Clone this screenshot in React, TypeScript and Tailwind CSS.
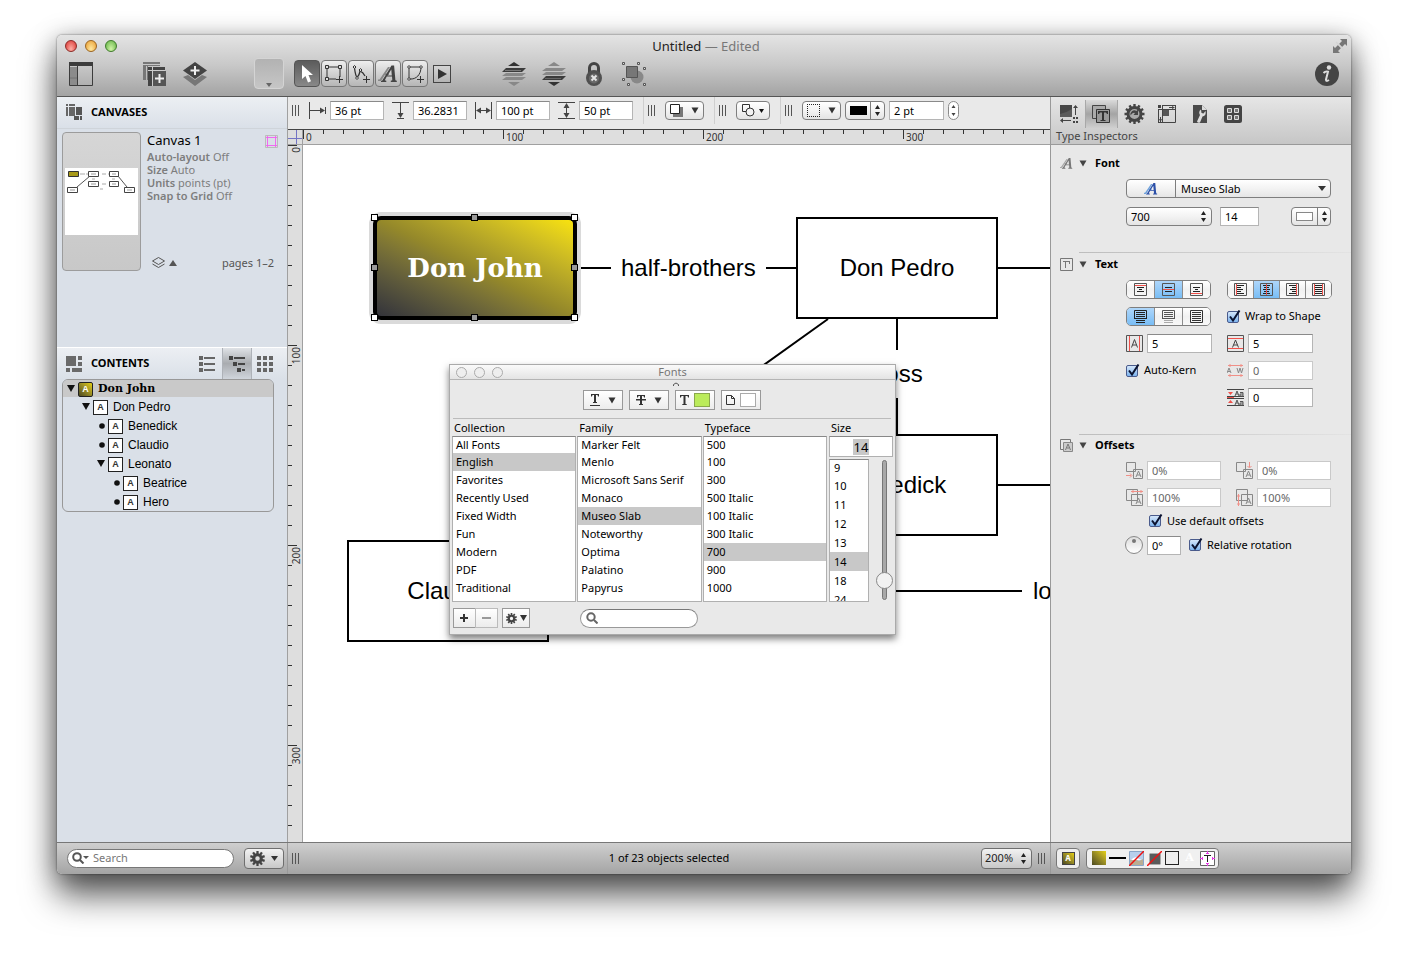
import type { ReactNode } from 'react';

type Kids = { children?: ReactNode };

function Svg({ w, h, children, className = '' }: Kids & { w: number; h: number; className?: string }) {
  return (
    <svg width={w} height={h} viewBox={`0 0 ${w} ${h}`} className={`shrink-0 ${className}`} fill="none" aria-hidden="true">
      {children}
    </svg>
  );
}

/* ---------- small shared drawings ---------- */

const Grip = () => (
  <Svg w={8} h={11}>
    <path d="M.5 0v11M3.500 0v11M6.500 0v11" stroke="#555" />
  </Svg>
);

const Down = ({ fill = '#333' }: { fill?: string }) => (
  <Svg w={8} h={7}>
    <path d="M.5.500h7L4 6.500z" fill={fill} />
  </Svg>
);

const UpDown = () => (
  <Svg w={5} h={11}>
    <path d="M2.500 0L5 4H0zM2.500 11L0 7h5z" fill="#222" />
  </Svg>
);

const Gear = ({ size = 14 }: { size?: number }) => (
  <svg width={size} height={size} viewBox="0 0 20 20" className="shrink-0" fill="none" aria-hidden="true">
    <circle cx="10" cy="10" r="5" stroke="#444" strokeWidth="4" />
    {[0, 36, 72, 108, 144].map((a) => (
      <path key={a} d="M8.500 0h3v4h-3zM8.500 16h3v4h-3z" fill="#444" transform={`rotate(${a} 10 10)`} />
    ))}
  </svg>
);

const ScriptA = ({ fill = '#444', back = '#888', size = 18 }: { fill?: string; back?: string; size?: number }) => (
  <svg width={size} height={size} viewBox="0 0 20 20" className="shrink-0" aria-hidden="true">
    <path d="M0 17h3L12 3h-2L1.500 15.500H0zM5 11h6v-1.500H6z" fill={back} />
    <path d="M3 18v-1l1.300-.4L13.500 1.500h2.600l1.300 14.700 1.400.6V18h-6v-1.200l1.500-.5-.3-3.700H8.800l-2 3.600 1.500.6V18zm6.500-6.600h4.300l-.5-6z" fill={fill} />
  </svg>
);

/* ---------- shared controls ---------- */

const field = 'h-[19px] min-w-0 rounded-none border border-[#b5b5b5] border-t-[#8a8a8a] bg-white px-1 text-[11px] leading-4 text-black outline-none';
const pill = 'flex items-center justify-center rounded border border-[#7e7e7e] bg-linear-to-b from-white via-[#f3f3f3] to-[#e4e4e4]';
const flat = 'flex h-5 items-center justify-center border border-[#999] bg-linear-to-b from-white to-[#ececec]';

function Check({ label }: { label: string }) {
  return (
    <label className="flex items-center gap-1 whitespace-nowrap">
      <span className="grid size-[14px] shrink-0">
        <input type="checkbox" defaultChecked className="m-0 mt-px size-3 appearance-none rounded-[2px] border border-[#4a5b8c] bg-linear-to-b from-[#d4e6fa] to-[#7db4ee] [grid-area:1/1]" />
        <Svg w={14} h={14} className="pointer-events-none [grid-area:1/1]">
          <path d="M3 6.500l3 4L12.500 0.500" stroke="#0b1330" strokeWidth="2" />
        </Svg>
      </span>
      {label}
    </label>
  );
}

function Segments({ items, active, label, cell }: { items: ReactNode[]; active: number; label: string; cell: string }) {
  return (
    <div role="group" aria-label={label} className="flex h-[19px] w-fit overflow-hidden rounded-[5px] border border-[#7e7e7e]">
      {items.map((icon, i) => (
        <button
          key={i}
          aria-label={`${label} ${i + 1}`}
          className={`flex shrink-0 items-center justify-center ${cell} ${i ? 'border-l border-[#8c8c8c]' : ''} ${
            i === active ? 'bg-linear-to-b from-[#aed6fa] to-[#78bdf5]' : 'bg-linear-to-b from-white via-[#f1f1f1] to-[#f8f8f8]'
          }`}
        >
          {icon}
        </button>
      ))}
    </div>
  );
}

/* ---------- title bar and toolbar ---------- */

const tool = 'flex h-[27px] w-[26px] items-center justify-center rounded border border-[#777] bg-linear-to-b from-[#eee] to-[#b6b6b6] pt-px';

function Header() {
  return (
    <header className="flex flex-col border-b border-[#555] bg-linear-to-b from-[#e4e4e4] via-[#c8c8c8] to-[#a3a3a3]">
      <div className="flex h-[22px] items-center justify-between pr-1 pl-2">
        <div className="flex w-16 gap-2">
          <button aria-label="Close" className="size-3 rounded-full border border-[#8b2a26] bg-radial-[at_50%_80%] from-[#ffb0a6] to-[#d8322f]" />
          <button aria-label="Minimize" className="size-3 rounded-full border border-[#9a6420] bg-radial-[at_50%_80%] from-[#ffe9a0] to-[#e89a2c]" />
          <button aria-label="Zoom" className="size-3 rounded-full border border-[#3f7a2b] bg-radial-[at_50%_80%] from-[#d2f5a8] to-[#5eb040]" />
        </div>
        <h1 className="text-[13px] leading-4 text-[#222]">
          Untitled <span className="text-[#777]">— Edited</span>
        </h1>
        <div className="flex w-16 justify-end">
          <button aria-label="Full screen">
            <Svg w={14} h={14}>
              <path d="M7 0h7v7l-2-2-3 3-3-3 3-3zM0 7l2 2 3-3 3 3-3 3 2 2H0z" fill="#777" />
              <path d="M3 3l8 8" stroke="#d4d4d4" strokeWidth="1.500" />
            </Svg>
          </button>
        </div>
      </div>
      <div className="flex h-[39px] items-start pr-3 pl-3">
        <button aria-label="Toggle sidebar" className="mt-[5px]">
          <Svg w={24} h={24}>
            <path d="M0 0h24v4H0z" fill="#3c3c3c" />
            <path d="M.5 4v19.500h23V4M8.500 4v20" stroke="#3c3c3c" />
            <path d="M1 5h7v10H1zM1 17h7v6H1z" fill="#8b8b8b" />
            <path d="M1 16h7" stroke="#444" />
          </Svg>
        </button>
        <button aria-label="New canvas" className="mt-[5px] ml-[50px]">
          <Svg w={24} h={24}>
            <path d="M0 0h17v2H0zM0 3h17v1H0zM0 3h3v15H0zM4 3h1v15H4z" fill="#777" />
            <path d="M5 5h17v3H5zM5 9h4v15H5z" fill="#444" />
            <path d="M10 9h13v15H10z" fill="#555" />
            <path d="M5 8.500h17M9.500 5v19" stroke="#ccc" />
            <path d="M16.500 12v9M12 16.500h9" stroke="#eee" strokeWidth="2" />
          </Svg>
        </button>
        <button aria-label="New layer" className="mt-[5px] ml-4">
          <Svg w={24} h={24}>
            <path d="M0 15l5-2 7 5 7-5 5 2-12 9z" fill="#777" />
            <path d="M12 0l12 8.500L12 17 0 8.500z" fill="#444" />
            <path d="M12 4v9M7.500 8.500h9" stroke="#eee" strokeWidth="2" />
          </Svg>
        </button>
        <button aria-label="Styles" className="mt-px ml-[47px] flex h-[31px] w-[30px] items-end justify-center rounded border border-[#d4d4d4] bg-linear-to-b from-[#b2b2b2] to-[#c6c6c6] pb-px">
          <Svg w={6} h={4}>
            <path d="M0 0h6L3 4z" fill="#666" />
          </Svg>
        </button>
        <div className="mt-[3px] ml-[10px] flex gap-px">
          <button aria-label="Selection tool" className="flex h-[27px] w-[26px] items-center justify-center rounded border border-[#555] bg-linear-to-b from-[#5c5c5c] to-[#888] pt-px">
            <Svg w={12} h={18}>
              <path d="M1 0v14l3.500-3 2.500 6.500 3-1.200L7.500 10H12z" fill="#fff" />
            </Svg>
          </button>
          <button aria-label="Shape tool" className={tool}>
            <Svg w={18} h={18}>
              <path d="M2 2h13v10M11 14H2V2" stroke="#333" />
              <path d="M.5.500h3v3h-3zM13.500.500h3v3h-3zM.5 12.500h3v3h-3z" fill="#ddd" stroke="#333" />
              <path d="M14.500 11v7M11 14.500h7" stroke="#333" />
            </Svg>
          </button>
          <button aria-label="Line tool" className={tool}>
            <Svg w={18} h={18}>
              <path d="M2.500 3q1 8 2.500 9 2-1 3-6 3 1 5 5" stroke="#333" strokeWidth="1.300" />
              <path d="M2.500.500l1.500 1.500-1.500 1.500L1 2zM5 11.500l1.500 1.500L5 14.500 3.500 13zM8.500 3.500L10 5 8.500 6.500 7 5z" fill="#ddd" stroke="#333" />
              <path d="M14.500 11v7M11 14.500h7" stroke="#333" />
            </Svg>
          </button>
          <button aria-label="Text tool" className={tool}>
            <ScriptA size={20} />
          </button>
          <button aria-label="Pen tool" className={tool}>
            <Svg w={18} h={18}>
              <path d="M3 2h12M3 2v12h2c5 0 10-4 10-12" stroke="#333" />
              <path d="M3 .500l1.500 1.500L3 3.500 1.500 2zM3 12.500L4.500 14 3 15.500 1.500 14zM15 .500l1.500 1.500L15 3.500 13.500 2z" fill="#ddd" stroke="#333" />
              <path d="M14.500 11v7M11 14.500h7" stroke="#333" />
            </Svg>
          </button>
          <button aria-label="Browse tool" className="mt-[5px] ml-1 flex size-[18px] items-center justify-center border border-[#444] bg-linear-to-b from-[#d4d4d4] to-[#b4b4b4]">
            <Svg w={10} h={10}>
              <path d="M1 0l9 5-9 5z" fill="#333" />
            </Svg>
          </button>
        </div>
        <button aria-label="Bring forward" className="mt-[5px] ml-[51px]">
          <Svg w={24} h={24}>
            <path d="M12 0l6 4H6z" fill="#333" />
            <path d="M4 6h20l-4 4H0z" fill="#3c3c3c" />
            <path d="M4 11h20l-4 3H0zM4 15h20l-4 3H0z" fill="#888" />
            <path d="M6 20h12l-6 4z" fill="#888" />
            <path d="M3 8.500h16" stroke="#777" />
          </Svg>
        </button>
        <button aria-label="Send backward" className="mt-[5px] ml-4">
          <Svg w={24} h={24}>
            <path d="M12 0l6 4H6z" fill="#888" />
            <path d="M4 6h20l-4 3H0zM4 10h20l-4 3H0z" fill="#888" />
            <path d="M4 14h20l-4 4H0z" fill="#3c3c3c" />
            <path d="M6 20h12l-6 4z" fill="#333" />
            <path d="M3 16.500h16" stroke="#666" />
          </Svg>
        </button>
        <button aria-label="Lock" className="mt-[5px] ml-5">
          <Svg w={16} h={24}>
            <path d="M3.500 12V6a4.500 4.500 0 019 0v6" stroke="#444" strokeWidth="3" />
            <circle cx="8" cy="16" r="8" fill="#505050" />
            <circle cx="8" cy="16.500" r="5" fill="#6a6a6a" />
            <path d="M5.500 13.500l5 5M10.500 13.500l-5 5" stroke="#e4e4e4" strokeWidth="2" />
          </Svg>
        </button>
        <button aria-label="Group" className="mt-[5px] ml-5">
          <Svg w={25} h={24}>
            <circle cx="15" cy="15" r="6.500" fill="#888" />
            <path d="M4.500 4.500h11v11h-11z" fill="#777" stroke="#555" />
            <path d="M.5.500h2v2h-2zM15.500.500h2v2h-2zM21.500 5.500h2v2h-2zM.5 16.500h2v2h-2zM5.500 21.500h2v2h-2zM21.500 21.500h2v2h-2z" fill="#ddd" stroke="#555" />
          </Svg>
        </button>
        <button aria-label="Inspectors" className="mt-[5px] ml-auto">
          <Svg w={24} h={24}>
            <circle cx="12" cy="12" r="12" fill="#444" />
            <circle cx="14" cy="5.500" r="2.200" fill="#ddd" />
            <path d="M8.500 11q2-2 4.500-1.300L11 17.500q-.2 2.500 3 .5" stroke="#ddd" strokeWidth="2" />
          </Svg>
        </button>
      </div>
    </header>
  );
}

/* ---------- left sidebar ---------- */

function CanvasThumb() {
  return (
    <button aria-label="Canvas 1 preview" className="flex h-[139px] w-[79px] shrink-0 items-center justify-center rounded border border-[#9c9c9c] bg-linear-to-b from-[#d6d6d6] to-[#c8c8c8]">
      <Svg w={73} h={67}>
        <path d="M0 0h73v67H0z" fill="#fff" />
        <path d="M15 6h5M21 6h3M37 6h4M43 6h3M27 11h3M47 11h3M37 16h4M35 21h3" stroke="#aaa" />
        <path d="M25 8L12 19M53 8l9 11" stroke="#555" />
        <path d="M23.500 3.500h10v5h-10zM44.500 3.500h9v5h-9zM23.500 13.500h10v5h-10zM44.500 13.500h9v5h-9zM2.500 19.500h10v5h-10zM59.500 19.500h10v5h-10z" fill="#fff" stroke="#444" />
        <path d="M26 6h5M47 6h4M26 16h5M47 16h4M5 22h5M62 22h5" stroke="#999" />
        <path d="M3.500 3.500h10v5h-10z" fill="#a89a18" stroke="#333" />
      </Svg>
    </button>
  );
}

const outline = [
  { name: 'Don John', pad: 'pl-1', open: true, sel: true },
  { name: 'Don Pedro', pad: 'pl-[19px]', open: true },
  { name: 'Benedick', pad: 'pl-[34px]' },
  { name: 'Claudio', pad: 'pl-[34px]' },
  { name: 'Leonato', pad: 'pl-[34px]', open: true },
  { name: 'Beatrice', pad: 'pl-[49px]' },
  { name: 'Hero', pad: 'pl-[49px]' },
];

function Sidebar() {
  return (
    <aside className="flex w-[231px] shrink-0 flex-col border-r border-[#a0a0a0] bg-[#dae0e8]">
      <section className="flex h-[250px] flex-col">
        <div className="flex h-8 items-center gap-2 border-b border-[#cfd4da] bg-linear-to-b from-[#eceff3] to-[#dae0e8] pl-[9px]">
          <Svg w={17} h={17}>
            <path d="M0 0h2v2H0zM0 3h2v9H0zM3 0h6v2H3zM3 3h6v9H3z" fill="#666" />
            <path d="M10 3h6v8h-6zM8 12h5v4H8zM14 12h2v4h-2z" fill="#555" />
          </Svg>
          <h2 className="text-[11px] font-bold text-black">CANVASES</h2>
        </div>
        <div className="flex gap-[6px] px-[5px] pt-[3px]">
          <CanvasThumb />
          <div className="flex min-w-0 flex-1 flex-col pr-1">
            <div className="flex items-start justify-between">
              <h3 className="text-[13px] leading-4 text-black">Canvas 1</h3>
              <Svg w={13} h={13} className="mt-[3px]">
                <path d="M.5.500h12v12H.5z" stroke="#bbb" />
                <path d="M2.500 1v11M10.500 1v11M1 2.500h11M1 10.500h11" stroke="#f06af0" />
              </Svg>
            </div>
            <div className="mt-[2px] text-[11px] leading-[13px] text-[#7d7d7d]">
              <p><span className="font-semibold">Auto-layout</span> Off</p>
              <p><span className="font-semibold">Size</span> Auto</p>
              <p><span className="font-semibold">Units</span> points (pt)</p>
              <p><span className="font-semibold">Snap to Grid</span> Off</p>
            </div>
            <div className="mt-auto flex items-center gap-1 pr-1 pl-[5px] text-[#555]">
              <button aria-label="Layers" className="flex items-center gap-1">
                <Svg w={13} h={12}>
                  <path d="M6.500.500L12.500 4l-6 3.500L.5 4z" stroke="#555" />
                  <path d="M.5 7l6 3.500 6-3.500" stroke="#555" />
                </Svg>
                <Svg w={8} h={6}>
                  <path d="M4 0l4 6H0z" fill="#555" />
                </Svg>
              </button>
              <span className="ml-auto leading-4">pages 1–2</span>
            </div>
          </div>
        </div>
      </section>
      <section className="border-t border-white">
        <div className="flex h-[31px] items-center bg-linear-to-b from-[#eceff3] to-[#dae0e8] pr-[9px] pl-[9px]">
          <Svg w={16} h={16}>
            <path d="M0 0h10v10H0zM12 0h4v4h-4zM12 6h4v4h-4zM0 12h4v4H0zM6 12h10v4H6z" fill="#6a6a6a" />
          </Svg>
          <h2 className="ml-[9px] text-[11px] font-bold text-black">CONTENTS</h2>
          <div className="ml-auto flex h-full">
            <button aria-label="List" className="flex w-[30px] items-center justify-center">
              <Svg w={16} h={16}>
                <path d="M0 0h4v4H0zM0 6h4v4H0zM0 12h4v4H0zM5 1h11v2H5zM5 7h11v2H5zM5 13h11v2H5z" fill="#666" />
              </Svg>
            </button>
            <button aria-label="Outline" className="flex w-[30px] items-center justify-center border-x border-[#aeb2b8] bg-linear-to-b from-[#dfe2e6] via-[#a9acb0] to-[#d0d5dc]">
              <Svg w={16} h={16}>
                <path d="M0 0h4v4H0zM5 1h11v2H5zM4 6h4v4H4zM9 7h7v2H9zM8 12h4v4H8zM13 13h3v2h-3z" fill="#444" />
              </Svg>
            </button>
            <button aria-label="Grid" className="flex w-[26px] items-center justify-center">
              <Svg w={16} h={16}>
                <path d="M0 0h4v4H0zM6 0h4v4H6zM12 0h4v4h-4zM0 6h4v4H0zM6 6h4v4H6zM12 6h4v4h-4zM0 12h4v4H0zM6 12h4v4H6zM12 12h4v4h-4z" fill="#666" />
              </Svg>
            </button>
          </div>
        </div>
        <ul className="mr-[13px] ml-[5px] overflow-hidden rounded-md border border-[#989898] font-['Liberation_Sans',sans-serif] text-[12px] text-black">
          {outline.map((n) => (
            <li key={n.name}>
              <button className={`flex w-full items-center ${n.pad} ${n.sel ? 'h-[17px] bg-[#c9c9c9]' : 'h-[19px]'}`}>
                <Svg w={8} h={7}>
                  {n.open ? <path d="M0 0h8L4 7z" fill="#111" /> : <circle cx="5" cy="4" r="2.800" fill="#111" />}
                </Svg>
                <span
                  className={`mt-[2px] ml-[3px] flex size-[15px] shrink-0 items-center justify-center border border-[#222] text-[9px] leading-none font-bold ${
                    n.sel ? 'rounded-[2px] bg-linear-to-tr from-[#4d4a20] to-[#e6d010] text-white' : 'bg-white text-[#333]'
                  }`}
                >
                  A
                </span>
                <span className={n.sel ? "ml-[5px] font-['DejaVu_Serif',serif] text-[11px] leading-4 font-bold" : 'ml-[5px] leading-4'}>{n.name}</span>
              </button>
            </li>
          ))}
        </ul>
      </section>
    </aside>
  );
}

/* ---------- property bar ---------- */

function PropertyBar() {
  const divider = <span className="ml-[10px] h-[27px] w-px bg-[#cfcfcf]" />;
  return (
    <div className="flex h-8 shrink-0 items-center bg-[#e9e9e9] pb-[5px] pl-1">
      <Grip />
      <label className="ml-[9px] flex items-center gap-1">
        <Svg w={17} h={17}>
          <path d="M.5 0v17M0 8.500h15M16.500 5v7" stroke="#444" />
          <path d="M11 5.500l5 3-5 3z" fill="#444" />
        </Svg>
        <input aria-label="X position" defaultValue="36 pt" className={`w-[54px] ${field}`} />
      </label>
      <label className="ml-2 flex items-center gap-1">
        <Svg w={17} h={17}>
          <path d="M0 .5h17M8.500 0v15M5 16.500h7" stroke="#444" />
          <path d="M5.500 11l3 5 3-5z" fill="#444" />
        </Svg>
        <input aria-label="Y position" defaultValue="36.2831" className={`w-[54px] ${field}`} />
      </label>
      <label className="ml-2 flex items-center gap-1">
        <Svg w={17} h={17}>
          <path d="M.5 0v17M16.500 0v17M2 8.500h13" stroke="#444" />
          <path d="M6 5.500l-5 3 5 3zM11 5.500l5 3-5 3z" fill="#444" />
        </Svg>
        <input aria-label="Width" defaultValue="100 pt" className={`w-[54px] ${field}`} />
      </label>
      <label className="ml-2 flex items-center gap-1">
        <Svg w={17} h={17}>
          <path d="M0 .5h17M0 16.500h17M8.500 2v13" stroke="#444" />
          <path d="M5.500 6l3-5 3 5zM5.500 11l3 5 3-5z" fill="#444" />
        </Svg>
        <input aria-label="Height" defaultValue="50 pt" className={`w-[54px] ${field}`} />
      </label>
      {divider}
      <span className="ml-1 flex"><Grip /></span>
      <button aria-label="Shadow" className={`ml-[9px] h-[19px] w-[39px] gap-2 ${pill}`}>
        <Svg w={13} h={13}>
          <path d="M3 3h10v10H3z" fill="#777" />
          <path d="M.5.500h9v9h-9z" fill="#fff" stroke="#222" />
        </Svg>
        <Down />
      </button>
      {divider}
      <span className="ml-1 flex"><Grip /></span>
      <button aria-label="Shape" className={`ml-[9px] h-[19px] w-[34px] gap-1 ${pill}`}>
        <Svg w={13} h={13}>
          <path d="M.5.500h7v7h-7z" stroke="#333" />
          <circle cx="8" cy="8" r="4" fill="#f3f3f3" stroke="#333" />
        </Svg>
        <Svg w={5} h={4}>
          <path d="M0 0h5L2.500 4z" fill="#111" />
        </Svg>
      </button>
      {divider}
      <span className="ml-1 flex"><Grip /></span>
      <button aria-label="Stroke style" className={`ml-[9px] h-[19px] w-[39px] gap-2 ${pill}`}>
        <Svg w={13} h={13}>
          <path d="M0 .5h13M0 12.500h13M.5 0v13M12.500 0v13" stroke="#222" strokeDasharray="1 1" />
        </Svg>
        <Down />
      </button>
      <button aria-label="Stroke color" className={`ml-1 h-[19px] w-10 ${pill}`}>
        <span className="mr-[3px] h-[9px] w-[17px] bg-black" />
        <span className="flex h-full items-center border-l border-[#7e7e7e] pl-[4px]"><UpDown /></span>
      </button>
      <input aria-label="Stroke width" defaultValue="2 pt" className={`ml-1 w-[55px] ${field}`} />
      <button aria-label="Adjust stroke width" className="ml-1 flex h-[19px] w-[11px] items-center justify-center rounded-full border border-[#8a8a8a] bg-white">
        <Svg w={5} h={11}>
          <path d="M2.500 0l2 3h-4zM2.500 11l-2-3h4z" fill="#444" />
        </Svg>
      </button>
    </div>
  );
}

/* ---------- rulers and canvas ---------- */

const hundreds = [0, 1, 2, 3];
const minor = Array.from({ length: 120 }, (_, i) => i);

function TopRuler() {
  return (
    <div className="flex h-4 shrink-0 border-t border-b border-t-[#444] border-b-[#a0a0a0] bg-[#dedede]">
      <Svg w={15} h={14}>
        <path d="M8.500 0v14M0 8.500h14" stroke="#7474c4" />
        <path d="M14.500 0v14" stroke="#a0a0a0" />
      </Svg>
      <svg className="h-[14px] min-w-0 flex-1">
        {minor.map((i) => (
          <path key={i} d={`M${i * 20 + 0.5} 0v${i % 10 ? 4 : 9}`} stroke="#333" />
        ))}
        {hundreds.map((i) => (
          <text key={i} x={i * 200 + 3} y={11} fontSize={10} fill="#333">{i * 100}</text>
        ))}
      </svg>
    </div>
  );
}

function SideRuler() {
  return (
    <svg className="w-[15px] shrink-0 border-r border-[#a0a0a0] bg-[#dedede]">
      {minor.map((i) => (
        <path key={i} d={`M0 ${i * 20 + 0.5}h${i % 10 ? 4 : 9}`} stroke="#333" />
      ))}
      {hundreds.map((i) => (
        <text key={i} transform={`translate(12 ${i * 200 + 2}) rotate(-90)`} textAnchor="end" fontSize={10} fill="#333">{i * 100}</text>
      ))}
    </svg>
  );
}

const box = 'absolute flex h-[102px] w-[202px] items-center justify-center border-2 border-black bg-white';
const note = 'absolute leading-7 whitespace-nowrap';
const handle = 'absolute size-[7px] border border-black bg-white';
const midHandle = 'absolute size-[7px] border border-black bg-[#999]';

function Canvas() {
  return (
    <div className="relative min-w-0 flex-1 overflow-hidden bg-white font-['Liberation_Sans',sans-serif] text-[24px] text-black">
      <svg className="absolute inset-0 size-full" stroke="#000" strokeWidth="2">
        <path d="M273 123h35M463 123h31M694 123h60M525 174L246 374M594 174v31M594 253v37M694 340h60M246 446h473" />
      </svg>
      <div className="absolute top-[71px] left-[70px] flex h-[104px] w-[204px] items-center justify-center rounded-lg border-4 border-black bg-linear-to-tr from-[#33333a] via-[#94882a] to-[#f9e30c] shadow-[0_0_0_4px_#dadada]">
        <span className="font-['DejaVu_Serif',serif] text-[26px] leading-7 font-bold whitespace-nowrap text-white">Don John</span>
        <i className={`${handle} -top-[6px] -left-[6px]`} />
        <i className={`${midHandle} -top-[6px] left-[94px]`} />
        <i className={`${handle} -top-[6px] -right-[5px]`} />
        <i className={`${midHandle} top-[44px] -left-[6px]`} />
        <i className={`${midHandle} top-[44px] -right-[5px]`} />
        <i className={`${handle} -bottom-[5px] -left-[6px]`} />
        <i className={`${midHandle} -bottom-[5px] left-[94px]`} />
        <i className={`${handle} -right-[5px] -bottom-[5px]`} />
      </div>
      <span className={`${note} top-[109px] left-[318px]`}>half-brothers</span>
      <div className={`${box} top-[72px] left-[493px]`}>Don Pedro</div>
      <span className={`${note} top-[215px] left-[569px]`}>boss</span>
      <div className={`${box} top-[289px] left-[493px]`}>Benedick</div>
      <div className={`${box} top-[395px] left-[44px]`}>Claudio</div>
      <span className={`${note} top-[432px] left-[730px]`}>loves</span>
      <FontsPanel />
    </div>
  );
}

/* ---------- floating Fonts panel ---------- */

function FontList({ label, items, active }: { label: string; items: string[]; active: number }) {
  return (
    <div className="flex min-w-0 flex-1 flex-col">
      <h3 className="px-[2px] leading-[17px]">{label}</h3>
      <ul className="h-[166px] overflow-hidden border border-[#b0b0b0] border-t-[#888] bg-white">
        {items.map((t, i) => (
          <li key={t}>
            <button className={`flex w-full items-center px-[3px] leading-4 whitespace-nowrap ${i ? 'h-[18px]' : 'h-4'} ${i === active ? 'bg-[#c8c8c8]' : ''}`}>{t}</button>
          </li>
        ))}
      </ul>
    </div>
  );
}

function FontsPanel() {
  return (
    <section aria-label="Fonts" className="absolute top-[219px] left-[146px] flex w-[447px] flex-col border border-[#aaa] bg-[#e9e9e9] font-['Noto_Sans',sans-serif] text-[11px] shadow-[0_4px_7px_rgba(0,0,0,0.5)]">
      <header className="flex h-[15px] items-center border-b border-[#b4b4b4] bg-linear-to-b from-[#fafafa] to-[#e4e4e4] px-[6px]">
        <div className="flex w-14 gap-[7px]">
          <button aria-label="Close fonts" className="size-[11px] rounded-full border border-[#aaa] bg-[#eee]" />
          <button aria-label="Minimize fonts" className="size-[11px] rounded-full border border-[#aaa] bg-[#eee]" />
          <button aria-label="Zoom fonts" className="size-[11px] rounded-full border border-[#aaa] bg-[#eee]" />
        </div>
        <h2 className="flex-1 text-center leading-4 text-[#777]">Fonts</h2>
        <span className="w-14" />
      </header>
      <div className="flex h-[10px] justify-center pt-[2px]">
        <Svg w={6} h={4} className="ml-[6px]">
          <path d="M.5 4V2.500q2.500-3 5 0V4" stroke="#555" />
        </Svg>
      </div>
      <div className="mr-[4px] ml-[3px] flex h-[29px] justify-center gap-[6px] border-b border-[#bbb]">
        <button aria-label="Underline" className={`w-10 gap-2 ${flat}`}>
          <Svg w={10} h={14}>
            <path d="M1 1h8v2.500H8L7.500 2H6v7h1v1H3V9h1V2H2.500L2 3.500H1zM0 12h10v1H0z" fill="#333" />
          </Svg>
          <Down />
        </button>
        <button aria-label="Strikethrough" className={`w-10 gap-2 ${flat}`}>
          <Svg w={10} h={12}>
            <path d="M1 1h8v2.500H8L7.500 2H6v8h1v1H3v-1h1V2H2.500L2 3.500H1zM0 5h10v1.500H0z" fill="#333" />
          </Svg>
          <Down />
        </button>
        <button aria-label="Text color" className={`w-10 gap-[5px] ${flat}`}>
          <Svg w={9} h={12}>
            <path d="M0 1h9v2.500H8L7.500 2h-2v8h1.200v1H2.300v-1h1.200V2h-2L1 3.500H0z" fill="#333" />
          </Svg>
          <span className="h-[14px] w-4 border border-[#8aa84c] bg-[#bbeb5b]" />
        </button>
        <button aria-label="Document color" className={`w-10 gap-[5px] ${flat}`}>
          <Svg w={9} h={12}>
            <path d="M.5 1.500h5l3 3v6h-8zM5.500 1.500v3h3" stroke="#333" />
          </Svg>
          <span className="h-[14px] w-4 border border-[#aaa] bg-white" />
        </button>
      </div>
      <div className="flex gap-px px-[2px]">
        <FontList label="Collection" active={1} items={['All Fonts', 'English', 'Favorites', 'Recently Used', 'Fixed Width', 'Fun', 'Modern', 'PDF', 'Traditional']} />
        <FontList label="Family" active={4} items={['Marker Felt', 'Menlo', 'Microsoft Sans Serif', 'Monaco', 'Museo Slab', 'Noteworthy', 'Optima', 'Palatino', 'Papyrus']} />
        <FontList label="Typeface" active={6} items={['500', '100', '300', '500 Italic', '100 Italic', '300 Italic', '700', '900', '1000']} />
        <div className="ml-px flex w-[64px] flex-col">
          <label htmlFor="font-size" className="px-[2px] leading-[17px]">Size</label>
          <div className="flex h-[21px] items-center justify-center border border-[#b0b0b0] border-t-[#888] bg-white">
            <input id="font-size" defaultValue="14" className="h-4 w-4 bg-[#c8c8c8] text-center text-[13px] leading-4 outline-none" />
          </div>
          <div className="mt-[2px] flex h-[143px]">
            <ul className="w-10 overflow-hidden border border-[#b0b0b0] border-t-[#888] bg-white">
              {['9', '10', '11', '12', '13', '14', '18', '24'].map((t, i) => (
                <li key={t}>
                  <button className={`flex w-full items-center px-1 leading-4 ${i ? 'h-[19px]' : 'h-4'} ${t === '14' ? 'bg-[#c8c8c8]' : ''}`}>{t}</button>
                </li>
              ))}
            </ul>
            <input
              type="range"
              aria-label="Font size"
              min={0}
              max={100}
              defaultValue={92}
              className="mt-px ml-[7px] h-[140px] w-[17px] appearance-none bg-transparent [writing-mode:vertical-lr] [&::-webkit-slider-runnable-track]:w-[5px] [&::-webkit-slider-runnable-track]:rounded-full [&::-webkit-slider-runnable-track]:border [&::-webkit-slider-runnable-track]:border-[#777] [&::-webkit-slider-runnable-track]:bg-[#a8a8a8] [&::-webkit-slider-thumb]:-ml-[7px] [&::-webkit-slider-thumb]:size-[17px] [&::-webkit-slider-thumb]:appearance-none [&::-webkit-slider-thumb]:rounded-full [&::-webkit-slider-thumb]:border [&::-webkit-slider-thumb]:border-[#888] [&::-webkit-slider-thumb]:bg-[#f2f2f2]"
            />
          </div>
        </div>
      </div>
      <div className="flex h-8 items-center px-[3px]">
        <button aria-label="Add collection" className={`w-[23px] ${flat}`}>
          <Svg w={9} h={8}>
            <path d="M4 0v8M0 4h8" stroke="#333" strokeWidth="2" />
          </Svg>
        </button>
        <button aria-label="Remove collection" className="-ml-px flex h-5 w-[23px] items-center justify-center border border-[#bbb] bg-linear-to-b from-white to-[#ececec]">
          <Svg w={9} h={2}>
            <path d="M0 1h9" stroke="#999" strokeWidth="2" />
          </Svg>
        </button>
        <button aria-label="Actions" className={`ml-1 w-7 gap-[3px] ${flat}`}>
          <Gear size={11} />
          <Svg w={7} h={6}>
            <path d="M0 0h7L3.500 6z" fill="#333" />
          </Svg>
        </button>
        <label className="ml-[50px] flex h-[19px] w-[118px] items-center gap-1 rounded-full border border-[#999] border-t-[#777] bg-white px-[5px]">
          <Svg w={12} h={12}>
            <circle cx="5" cy="5" r="3.700" stroke="#666" strokeWidth="2" />
            <path d="M8 8l3.500 3.500" stroke="#666" strokeWidth="2" />
          </Svg>
          <input aria-label="Search fonts" className="w-full min-w-0 bg-transparent text-[11px] outline-none" />
        </label>
      </div>
    </section>
  );
}

/* ---------- inspectors ---------- */

function TabIcons() {
  return [
    <Svg key="g" w={18} h={18}>
      <path d="M0 0h12v12H0z" fill="#5c5c5c" />
      <path d="M0 9q6-1 12-5V0H0z" fill="#484848" />
      <path d="M15.500 1v9M1 15.500h10" stroke="#444" />
      <path d="M13 3l2.500-3L18 3zM3 13l-3 2.500L3 18zM13 12h2v2h-2zM16 12h2v2h-2zM13 16h2v2h-2zM16 16h2v2h-2z" fill="#444" />
    </Svg>,
    <Svg key="t" w={19} h={18}>
      <path d="M.5.500h13v13H.5z" fill="#aaa" stroke="#444" />
      <path d="M4.500 4.500h13v13h-13z" fill="#999" stroke="#333" />
      <path d="M6 6h10v3h-1l-1-1.500h-2V15h1.500v1h-5v-1H10V7.500H8L7 9H6z" fill="#333" />
    </Svg>,
    <svg key="p" width="21" height="20" viewBox="0 0 20 20" fill="none">
      <circle cx="10" cy="10" r="6.500" fill="#aaa" stroke="#444" strokeWidth="3" />
      {[0, 30, 60, 90, 120, 150].map((a) => (
        <path key={a} d="M8.800 0h2.400v3H8.800zM8.800 17h2.400v3H8.800z" fill="#444" transform={`rotate(${a} 10 10)`} />
      ))}
      <path d="M6 11.500a4 4 0 016-4.500l1.500-1.500V11H9l1.500-2Q8 8 6 11.500z" fill="#444" />
    </svg>,
    <Svg key="c" w={19} h={18}>
      <path d="M0 0h3v3H0zM5 0h13v1H5zM0 5h1v13H0z" fill="#444" />
      <path d="M5 5h6v6H5z" fill="#555" />
      <path d="M4.500 0v18M0 4.500h18M17.500 0v17.500H0M2.500 12v5M11 2.500h4" stroke="#444" />
      <path d="M14 1l3 1.500L14 4zM1 14l1.500 3L4 14z" fill="#444" />
    </Svg>,
    <Svg key="d" w={15} h={18}>
      <path d="M0 0h9l5 5v13H0z" fill="#4a4a4a" />
      <path d="M9 0v5h5" fill="#ddd" />
      <path d="M4 16.500L7 10Q5 6.500 8 4.500l.5 3.500 2 .5L12.500 6q1 4.500-3 5.500l-2.500 6q-2 1-3-1z" fill="#ddd" />
    </Svg>,
    <Svg key="s" w={19} h={18}>
      <rect width="18" height="18" rx="2.500" fill="#444" />
      <path d="M3.500 3.500h4v4h-4zM10.500 3.500h4v4h-4zM3.500 10.500h4v4h-4zM10.500 10.500h4v4h-4z" fill="#777" stroke="#ddd" />
    </Svg>,
  ];
}

const tabNames = ['Properties', 'Type', 'Action', 'Canvas', 'Document', 'Stencils'];

function SectionHead({ icon, title }: { icon: ReactNode; title: string }) {
  return (
    <div className="flex h-5 items-center pl-[9px]">
      <span className="flex w-[19px]">{icon}</span>
      <button className="flex items-center gap-2 font-bold text-black">
        <Down fill="#444" />
        {title}
      </button>
    </div>
  );
}

const Rule = () => <hr className="ml-7 h-px border-0 bg-linear-to-r from-[#bdbdbd] to-[#e3e3e3]" />;

const Page = ({ lines, red }: { lines: string; red: string }) => (
  <Svg w={13} h={13}>
    <path d="M.5.500h12v12H.5z" stroke="#555" />
    <path d={lines} stroke="#222" />
    <path d={red} stroke="#f0504a" />
  </Svg>
);

const OffsetIcon = ({ arrow, boxes }: { arrow: string; boxes: string }) => (
  <Svg w={17} h={17}>
    <path d={boxes} stroke="#888" />
    <path d="M10 15l2.500-6 2.500 6M11 13h3" stroke="#888" />
    <path d={arrow} stroke="#f09088" />
  </Svg>
);

const dim = 'h-[19px] min-w-0 border border-[#c9c9c9] bg-white px-1 text-[11px] leading-4 text-[#666] outline-none';

function Inspector() {
  return (
    <aside className="flex w-[301px] shrink-0 flex-col border-l border-[#999] bg-[#e8e8e8] text-black">
      <div className="flex h-12 flex-col border-b border-[#999] bg-linear-to-b from-[#e6e6e6] to-[#c6c6c6]">
        <nav className="flex h-[31px] pt-[3px] pl-[1px]">
          {TabIcons().map((icon, i) => (
            <button
              key={tabNames[i]}
              aria-label={tabNames[i]}
              className={`flex w-[33px] items-center justify-center ${i === 1 ? 'border-x border-[#a8a8a8] bg-linear-to-b from-[#dadada] via-[#a4a4a4] to-[#cfcfcf]' : ''}`}
            >
              {icon}
            </button>
          ))}
        </nav>
        <h2 className="pl-[5px] leading-4 text-[#444]">Type Inspectors</h2>
      </div>

      <section className="flex h-[107px] flex-col pt-2">
        <SectionHead icon={<ScriptA size={13} fill="#777" back="#aaa" />} title="Font" />
        <div className="mt-[6px] ml-[75px] flex h-[19px] w-[205px] items-stretch overflow-hidden rounded border border-[#7e7e7e] bg-linear-to-b from-white via-[#f3f3f3] to-[#e6e6e6]">
          <button aria-label="Open font panel" className="flex w-[49px] items-center justify-center border-r border-[#7e7e7e]">
            <ScriptA size={14} fill="#2c50a8" back="#6fa2dc" />
          </button>
          <span className="grid flex-1 items-center">
            <select aria-label="Font family" className="appearance-none pl-[5px] leading-4 outline-none [grid-area:1/1]">
              <option>Museo Slab</option>
            </select>
            <span className="pointer-events-none mr-1 justify-self-end [grid-area:1/1]">
              <Svg w={8} h={5}>
                <path d="M0 0h8L4 5z" fill="#333" />
              </Svg>
            </span>
          </span>
        </div>
        <div className="mt-[9px] ml-[75px] flex w-[205px] items-center">
          <span className={`grid! h-[19px] w-[86px] justify-stretch! ${pill}`}>
            <select aria-label="Font weight" className="appearance-none pl-1 leading-4 outline-none [grid-area:1/1]">
              <option>700</option>
            </select>
            <span className="pointer-events-none mr-[5px] justify-self-end [grid-area:1/1]"><UpDown /></span>
          </span>
          <input aria-label="Font size" defaultValue="14" className={`ml-2 w-[39px] ${field}`} />
          <button aria-label="Font color" className={`ml-auto h-[19px] w-10 ${pill}`}>
            <span className="mr-1 h-[9px] w-[17px] border border-[#888] bg-white" />
            <span className="flex h-full items-center border-l border-[#7e7e7e] pl-1"><UpDown /></span>
          </button>
        </div>
      </section>

      <Rule />
      <section className="flex h-[181px] flex-col pt-px">
        <SectionHead
          icon={
            <Svg w={13} h={13}>
              <path d="M.5.500h12v12H.5z" stroke="#777" />
              <path d="M3 3.500h7M5.500 3v7M9.500 3v3" stroke="#777" />
            </Svg>
          }
          title="Text"
        />
        <div className="mt-[6px] ml-[75px] grid grid-cols-[86px_105px] content-start items-center gap-x-[15px] gap-y-2">
          <Segments
            label="Vertical alignment"
            cell="w-[28px] first:w-[27px]"
            active={1}
            items={[
              <Page key="a" lines="M3 4.500h7M5 6.500h3M3 8.500h7" red="M1 2.500h11" />,
              <Page key="b" lines="M3 4.500h7M3 8.500h7" red="M1 6.500h11" />,
              <Page key="c" lines="M3 4.500h7M5 6.500h3M3 8.500h7" red="M1 10.500h11" />,
            ]}
          />
          <Segments
            label="Horizontal alignment"
            cell="w-[26px] first:w-[25px]"
            active={1}
            items={[
              <Page key="a" lines="M3 2.500h7M3 4.500h4M3 6.500h6M3 8.500h4M3 10.500h7" red="M2.500 1v11" />,
              <Page key="b" lines="M3 2.500h7M4 4.500h5M3 6.500h7M4 8.500h5M3 10.500h7" red="M6.500 1v11" />,
              <Page key="c" lines="M3 2.500h7M6 4.500h4M4 6.500h6M6 8.500h4M3 10.500h7" red="M10.500 1v11" />,
              <Page key="d" lines="M3 2.500h7M3 4.500h7M3 6.500h7M3 8.500h7M3 10.500h7" red="M2.500 1v11M10.500 1v11" />,
            ]}
          />
          <Segments
            label="Overflow"
            cell="w-[28px] first:w-[27px]"
            active={0}
            items={[
              <Svg key="a" w={13} h={13}>
                <path d="M.5 9V.5h12V9M2 2.500h9M2 4.500h9M2 6.500h9M0 8.500h13M2 10.500h9M2 12.500h9" stroke="#222" />
              </Svg>,
              <Svg key="b" w={13} h={13}>
                <path d="M.5 9V.5h12V9M2 2.500h9M2 4.500h9M2 6.500h9M0 8.500h13" stroke="#555" />
                <path d="M2 10.500h9M2 12.500h9" stroke="#aaa" />
              </Svg>,
              <Svg key="c" w={13} h={13}>
                <path d="M.5.500h12v12H.5zM2 2.500h9M2 4.500h9M2 6.500h9M2 8.500h9M2 10.500h9" stroke="#333" />
              </Svg>,
            ]}
          />
          <Check label="Wrap to Shape" />
          <label className="flex items-center justify-between">
            <Svg w={17} h={17}>
              <path d="M.5.500h16v16H.5z" stroke="#555" />
              <path d="M5.500 12.500l3-8 3 8M6.500 10h4" stroke="#444" />
              <path d="M3.500 1v15M13.500 1v15" stroke="#f0504a" />
            </Svg>
            <input aria-label="Side margin" defaultValue="5" className={`w-[65px] ${field}`} />
          </label>
          <label className="flex items-center gap-1">
            <Svg w={17} h={17}>
              <path d="M.5.500h16v16H.5z" stroke="#555" />
              <path d="M5.500 12.500l3-7.500 3 7.500M6.500 10h4" stroke="#444" />
              <path d="M1 3.500h15M1 13.500h15" stroke="#f0504a" />
            </Svg>
            <input aria-label="Top margin" defaultValue="5" className={`w-[65px] ${field}`} />
          </label>
          <Check label="Auto-Kern" />
          <label className="flex items-center gap-1">
            <Svg w={17} h={13}>
              <path d="M1 1.500h15M3 0v3M14 0v3M1 11.500h15M3 10v3M14 10v3" stroke="#f09088" />
              <path d="M0 9l2-5 2 5M1 7.500h2M10 4l1.500 5 1.500-5 1.500 5L16 4" stroke="#888" />
            </Svg>
            <input aria-label="Kerning" defaultValue="0" disabled className={`w-[65px] ${dim}`} />
          </label>
          <label className="col-start-2 flex items-center gap-1">
            <Svg w={17} h={17}>
              <path d="M0 .5h17M0 7.500h17M0 9.500h17M0 16.500h17" stroke="#444" />
              <path d="M8 7l2-5 2 5M9 5h2M13 3.500h3V7h-3V5h3M8 16l2-5 2 5M9 14h2M13 12.500h3V16h-3v-2h3" stroke="#555" />
              <path d="M1 3h5L3.500 6zM1 14h5l-2.500-3z" fill="#f0504a" />
              <path d="M0 8.500h7" stroke="#f0504a" />
            </Svg>
            <input aria-label="Line spacing" defaultValue="0" className={`w-[65px] ${field}`} />
          </label>
        </div>
      </section>

      <Rule />
      <section className="flex flex-col">
        <SectionHead
          icon={
            <Svg w={13} h={13}>
              <path d="M3 10.500H.5V.5h10V3" stroke="#777" />
              <path d="M3.500 3.500h9v9h-9z" fill="#ccc" stroke="#888" />
              <path d="M5.500 11L8 5l2.500 6M7 9h2" stroke="#777" />
            </Svg>
          }
          title="Offsets"
        />
        <div className="mt-[6px] ml-[75px] grid w-[205px] grid-cols-[95px_95px] gap-x-[15px] gap-y-2">
          <label className="flex items-center gap-1">
            <OffsetIcon boxes="M.5.500h9v9h-9zM7.500 7.500h9v9h-9z" arrow="M0 13.500h5M4 11.500l2 2-2 2" />
            <input aria-label="Horizontal offset" defaultValue="0%" disabled className={`w-[74px] ${dim}`} />
          </label>
          <label className="flex items-center gap-1">
            <OffsetIcon boxes="M.5.500h9v9h-9zM7.500 7.500h9v9h-9z" arrow="M13.500 0v5M11.500 4l2 2 2-2" />
            <input aria-label="Vertical offset" defaultValue="0%" disabled className={`w-[74px] ${dim}`} />
          </label>
          <label className="flex items-center gap-1">
            <OffsetIcon boxes="M.5.500h11v11H.5zM5.500 5.500h11v11h-11z" arrow="M5 2.500h12M7 1v3M15 1v3" />
            <input aria-label="Text width" defaultValue="100%" disabled className={`w-[74px] ${dim}`} />
          </label>
          <label className="flex items-center gap-1">
            <OffsetIcon boxes="M.5.500h11v11H.5zM5.500 5.500h11v11h-11z" arrow="M2.500 5v12M1 7h3M1 15h3" />
            <input aria-label="Text height" defaultValue="100%" disabled className={`w-[74px] ${dim}`} />
          </label>
        </div>
        <div className="mt-[6px] ml-[98px] flex"><Check label="Use default offsets" /></div>
        <div className="mt-[6px] ml-[74px] flex items-center">
          <button aria-label="Rotation dial" className="flex size-[18px] justify-center rounded-full border border-[#888] bg-linear-to-b from-[#ddd] to-white pt-[2px]">
            <span className="size-1 rounded-full bg-[#777]" />
          </button>
          <input aria-label="Rotation" defaultValue="0°" className={`ml-1 w-[34px] ${field}`} />
          <span className="ml-2"><Check label="Relative rotation" /></span>
        </div>
      </section>
    </aside>
  );
}

/* ---------- status bar ---------- */

const statusButton = 'flex h-[21px] items-center justify-center rounded border border-[#6e6e6e] bg-linear-to-b from-[#f2f2f2] to-[#c8c8c8]';

function StatusBar() {
  return (
    <footer className="flex h-8 shrink-0 border-t border-[#777] bg-linear-to-b from-[#cfcfcf] to-[#a4a4a4]">
      <div className="flex w-[231px] shrink-0 items-center border-r border-[#999] pr-[3px] pb-px pl-[10px]">
        <label className="flex h-[19px] w-[167px] items-center gap-1 rounded-full border border-[#777] bg-white pl-1">
          <Svg w={17} h={12}>
            <circle cx="5" cy="5" r="3.800" stroke="#555" strokeWidth="2" />
            <path d="M8 8l3.500 3.500" stroke="#555" strokeWidth="2" />
            <path d="M11 4h6l-3 3z" fill="#555" />
          </Svg>
          <input aria-label="Search" placeholder="Search" className="w-full min-w-0 bg-transparent text-[11px] outline-none placeholder:text-[#777]" />
        </label>
        <button aria-label="Actions" className={`ml-auto w-10 gap-[6px] ${statusButton}`}>
          <Gear size={15} />
          <Svg w={7} h={5}>
            <path d="M0 0h7L3.500 5z" fill="#333" />
          </Svg>
        </button>
      </div>
      <div className="grid min-w-0 flex-1 grid-cols-[1fr_auto_1fr] items-center px-1 pb-px">
        <Grip />
        <p className="pt-px whitespace-nowrap text-black">1 of 23 objects selected</p>
        <div className="flex items-center justify-end gap-[6px]">
          <span className={`grid! w-[51px] justify-stretch! ${statusButton}`}>
            <select aria-label="Zoom level" className="appearance-none pl-[3px] leading-4 text-[#222] outline-none [grid-area:1/1]">
              <option>200%</option>
            </select>
            <span className="pointer-events-none mr-[5px] justify-self-end [grid-area:1/1]"><UpDown /></span>
          </span>
          <Grip />
        </div>
      </div>
      <div className="flex w-[301px] shrink-0 items-center gap-[6px] border-l border-[#999] pb-px pl-[5px]">
        <button aria-label="Full style" className="flex h-[21px] w-6 items-center justify-center rounded border border-[#777] bg-[#eee]">
          <span className="flex size-[13px] items-center justify-center border border-[#444] bg-linear-to-tr from-[#4d4a20] to-[#e6d010] text-[8px] leading-none font-bold text-white">A</span>
        </button>
        <div className="flex h-[21px] w-[133px] items-center gap-[3px] rounded border border-[#777] bg-[#f0f0f0] pl-[5px]">
          <button aria-label="Fill" className="size-[14px] bg-linear-to-tr from-[#4d4a20] to-[#e6d010]" />
          <button aria-label="Stroke" className="h-[2px] w-[17px] bg-black" />
          <button aria-label="Image">
            <Svg w={15} h={15}>
              <path d="M.5.500h14v14H.5z" fill="#b8cfec" stroke="#8aa6c8" />
              <path d="M1 9l5-1 4 2 4-2v6H1z" fill="#b9ad93" />
              <path d="M2 9q4-5 8-1l3 1z" fill="#fff" />
              <path d="M0 15L15 0" stroke="#e11" strokeWidth="1.500" />
            </Svg>
          </button>
          <button aria-label="Shadow style">
            <Svg w={15} h={15}>
              <rect x="2.500" y="2.500" width="11" height="11" rx="1" fill="#5a5a5a" stroke="#aaa" />
              <path d="M0 15L15 0" stroke="#e11" strokeWidth="1.500" />
            </Svg>
          </button>
          <button aria-label="Shape style" className="size-[14px] border border-[#222] bg-[#eee]" />
          <button aria-label="Font style" className="w-[15px] font-['DejaVu_Serif',serif] text-[11px] leading-4 font-bold text-white">A</button>
          <button aria-label="Text position">
            <Svg w={15} h={15}>
              <path d="M.5.500h14v14H.5z" fill="#fff" stroke="#666" />
              <path d="M4 4.500h7M7.500 4v7" stroke="#222" />
              <path d="M7.500 0v3M6 2.500h3M7.500 12v3M6 12.500h3M0 7.500h3M2.500 6v3M12 7.500h3M12.500 6v3" stroke="#e838e8" />
            </Svg>
          </button>
        </div>
      </div>
    </footer>
  );
}

export default function App() {
  return (
    <div className="flex min-h-screen flex-col bg-white px-[57px] pt-[35px] pb-[79px] font-['Noto_Sans',sans-serif] text-[11px]">
      <div className="flex flex-1 flex-col overflow-hidden rounded-[5px] shadow-[0_0_2px_rgba(0,0,0,0.6),0_22px_34px_rgba(0,0,0,0.6),0_4px_26px_rgba(0,0,0,0.35)]">
        <Header />
        <div className="flex min-h-0 flex-1">
          <Sidebar />
          <main className="flex min-w-0 flex-1 flex-col">
            <PropertyBar />
            <TopRuler />
            <div className="flex min-h-0 flex-1">
              <SideRuler />
              <Canvas />
            </div>
          </main>
          <Inspector />
        </div>
        <StatusBar />
      </div>
    </div>
  );
}
